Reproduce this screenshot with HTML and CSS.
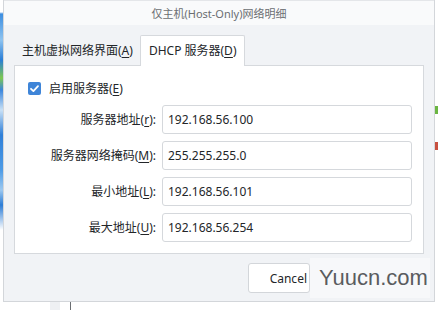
FILE: index.html
```html
<!DOCTYPE html>
<html lang="zh-CN">
<head>
    <meta charset="UTF-8">
    <title>仅主机(Host-Only)网络明细</title>
    <link rel="stylesheet" href="styles.css">
</head>
<body>
    <div class="screen">
        <div class="edge-left"></div>

        <div class="dialog">
            <!-- Title bar -->
            <div class="titlebar">仅主机(Host-Only)网络明细</div>

            <div class="dialog-body">
                <!-- Tabs -->
                <div class="tabs">
                    <div class="tab">主机虚拟网络界面(<u>A</u>)</div>
                    <div class="tab active">DHCP 服务器(<u>D</u>)</div>
                </div>

                <!-- DHCP pane -->
                <div class="pane">
                    <label class="check-row">
                        <span class="checkbox">
                            <svg width="13" height="13" viewBox="0 0 13 13">
                                <path d="M3 6.8 L5.4 9.1 L10 4.2" fill="none" stroke="#fff" stroke-width="1.8" stroke-linecap="round" stroke-linejoin="round"/>
                            </svg>
                        </span>
                        <span>启用服务器(<u>E</u>)</span>
                    </label>

                    <div class="form-grid">
                        <div class="field-label">服务器地址(<u>r</u>):</div>
                        <div class="field-input">192.168.56.100</div>

                        <div class="field-label">服务器网络掩码(<u>M</u>):</div>
                        <div class="field-input">255.255.255.0</div>

                        <div class="field-label">最小地址(<u>L</u>):</div>
                        <div class="field-input">192.168.56.101</div>

                        <div class="field-label">最大地址(<u>U</u>):</div>
                        <div class="field-input">192.168.56.254</div>
                    </div>
                </div>

                <!-- Buttons -->
                <div class="footer">
                    <button class="btn">Cancel</button>
                    <span class="watermark">Yuucn.com</span>
                </div>
            </div>
        </div>

        <div class="edge-right">
            <span class="dot green"></span>
            <span class="dot red"></span>
        </div>
    </div>

    <div class="below">
        <span class="below-square"></span>
        <span class="below-line"></span>
    </div>
</body>
</html>
```

FILE: styles.css
```css
body {
    margin: 0;
    padding: 0;
    background-color: #fff;
    font-family: "Noto Sans", "Noto Sans CJK SC", sans-serif;
    font-size: 12px;
    color: #232629;
    overflow: hidden;
}

u {
    text-decoration: underline;
    text-underline-offset: 2px;
}

.screen {
    display: flex;
    height: 302px;
}

.edge-left {
    width: 3px;
    background: linear-gradient(to bottom, #ffffff 0, #ffffff 12px, #3d8ee0 14px, #8ec3f0 40px, #2a7ed6 60px, #7dc850 78px, #3b86dc 90px, #c8e0f6 110px, #2f7fd8 135px, #4d9be6 170px, #9cc8f0 190px, #2d7dd6 205px, #ffffff 230px, #ffffff 100%);
}

.dialog {
    width: 430px;
    display: flex;
    flex-direction: column;
    border: 1px solid #d3d6da;
    border-top: none;
    background-color: #f1f3f6;
}

.titlebar {
    height: 24px;
    line-height: 26px;
    text-align: center;
    font-size: 11px;
    color: #6b6e72;
    background-color: #f9fafb;
    border-top: 1px solid #e4e6e9;
}

.dialog-body {
    flex: 1;
    display: flex;
    flex-direction: column;
    padding: 10px 10px 0 10px;
}

.tabs {
    display: flex;
    align-items: flex-end;
    height: 30px;
    margin-left: 1px;
}

.tab {
    padding: 0 7px;
    height: 29px;
    line-height: 29px;
    font-size: 12px;
}

.tab.active {
    height: 30px;
    line-height: 30px;
    padding: 0 8px;
    background-color: #fff;
    border: 1px solid #d6d9dd;
    border-bottom: none;
    border-radius: 2px 2px 0 0;
    margin-bottom: -1px;
    position: relative;
    z-index: 1;
}

.pane {
    height: 189px;
    background-color: #fff;
    border: 1px solid #d6d9dd;
    padding: 15px 11px 0 13px;
    box-sizing: border-box;
}

.check-row {
    display: flex;
    align-items: center;
    gap: 8px;
    height: 14px;
}

.checkbox {
    width: 13px;
    height: 13px;
    border-radius: 2px;
    background-color: #3f85d8;
    display: flex;
}

.form-grid {
    display: grid;
    grid-template-columns: 128px 1fr;
    column-gap: 6px;
    row-gap: 7px;
    margin-top: 10px;
}

.field-label {
    text-align: right;
    height: 29px;
    line-height: 29px;
}

.field-input {
    height: 29px;
    line-height: 27px;
    box-sizing: border-box;
    border: 1px solid #d5d8dc;
    border-radius: 3px;
    padding-left: 5px;
    background-color: #fff;
}

.footer {
    display: flex;
    justify-content: flex-end;
    align-items: center;
    height: 48px;
}

.btn {
    width: 62px;
    height: 30px;
    background-color: #fff;
    border: 1px solid #d3d6da;
    border-radius: 3px;
    font-family: "Noto Sans", sans-serif;
    font-size: 12px;
    color: #232629;
    text-align: right;
    padding: 0 2px 0 0;
}

.watermark {
    width: 120px;
    height: 40px;
    line-height: 40px;
    padding-left: 9px;
    box-sizing: border-box;
    background-color: #f7f8fa;
    font-family: "Liberation Sans", Arial, sans-serif;
    font-size: 22px;
    color: #5a5c5f;
    margin-right: -6px;
}

.edge-right {
    width: 3px;
    display: flex;
    flex-direction: column;
    background-color: #fff;
}

.dot {
    width: 3px;
    height: 8px;
}

.dot.green {
    margin-top: 106px;
    background-color: #6bb642;
}

.dot.red {
    margin-top: 28px;
    background-color: #c85040;
}

.below {
    display: flex;
    height: 8px;
    padding-left: 50px;
}

.below-square {
    width: 10px;
    height: 8px;
    background-color: #eef0f3;
}

.below-line {
    width: 1px;
    height: 8px;
    margin-left: 10px;
    background-color: #6b6e72;
}
```
